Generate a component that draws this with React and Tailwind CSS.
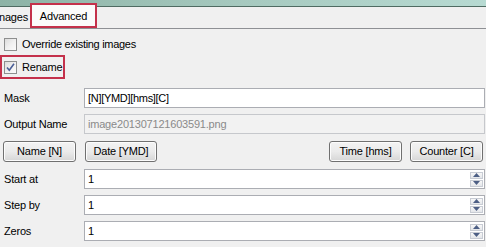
import React from "react";

const font = { fontFamily: '"Liberation Sans", Arial, sans-serif' };

function CheckBox({ checked }) {
  return (
    <div className="w-[13px] h-[13px] border border-[#8e8f8f] bg-gradient-to-br from-[#dcdcdc] via-[#f0f0f0] to-[#fbfbfb] flex items-center justify-center shrink-0">
      {checked && (
        <svg width="11" height="11" viewBox="0 0 11 11">
          <path d="M2 5.5 L4.3 8.3 L9 1.8" fill="none" stroke="#4a5f97" strokeWidth="1.6" />
        </svg>
      )}
    </div>
  );
}

function Btn({ children, w }) {
  return (
    <div
      className={`${w} h-[21px] rounded-[3px] border border-[#707070] bg-gradient-to-b from-[#f3f3f3] via-[#ebebeb] to-[#d6d6d6] flex items-center justify-center text-[11px] text-black tracking-[-0.2px] shadow-[inset_0_0_0_1px_#fcfcfc]`}
    >
      {children}
    </div>
  );
}

function Spin() {
  return (
    <div className="flex flex-col gap-[1px] mr-[1px]">
      <div className="w-[13px] h-[7px] border border-[#c8ccd4] bg-gradient-to-b from-[#f8f8f8] to-[#e4e6ea] flex items-center justify-center">
        <svg width="7" height="4" viewBox="0 0 7 4"><path d="M0 4 L3.5 0 L7 4 Z" fill="#4d5f85" /></svg>
      </div>
      <div className="w-[13px] h-[7px] border border-[#c8ccd4] bg-gradient-to-b from-[#f8f8f8] to-[#e4e6ea] flex items-center justify-center">
        <svg width="7" height="4" viewBox="0 0 7 4"><path d="M0 0 L3.5 4 L7 0 Z" fill="#4d5f85" /></svg>
      </div>
    </div>
  );
}

function Row({ label, children, mt }) {
  return (
    <div className={`flex items-center ${mt}`}>
      <div className="w-[84px] pl-[4px] text-[11px] text-black tracking-[-0.2px]">{label}</div>
      {children}
    </div>
  );
}

function SpinInput({ value }) {
  return (
    <div className="w-[401px] h-[20px] border border-[#abadb3] bg-white flex items-center justify-between">
      <span className="pl-[3px] text-[11px] text-black">{value}</span>
      <Spin />
    </div>
  );
}

export default function App() {
  return (
    <div className="w-[486px] h-[247px] bg-[#f0f0f0] overflow-hidden flex flex-col" style={font}>
      <div className="h-[6px] bg-gradient-to-r from-[#8db3a6] via-[#a6c9bf] to-[#b7dad2]" />
      <div className="h-[1px] bg-[#4f6b62]" />
      <div className="h-[22px] flex border-b border-[#8e9094] bg-[#f0f0f0]">
        <div className="w-[30px] overflow-hidden flex items-end pb-[3px]">
          <span className="text-[11px] text-black -ml-[1px] tracking-[-0.2px]">nages</span>
        </div>
        <div className="w-[67px] h-[25px] -mt-[4px] border-2 border-[#c4314b] bg-[#fbfbfb] flex items-center justify-center pt-[2px] relative z-10">
          <span className="text-[11px] text-black tracking-[-0.2px]">Advanced</span>
        </div>
      </div>

      <div className="flex items-center mt-[9px] pl-[4px] gap-[5px] h-[13px]">
        <CheckBox />
        <span className="text-[11px] text-black tracking-[-0.3px]">Override existing images</span>
      </div>

      <div className="mt-[4px] ml-0 w-[65px] h-[24px] border-2 border-[#c4314b] flex items-center pl-[2px] gap-[5px]">
        <CheckBox checked />
        <span className="text-[11px] text-black tracking-[-0.2px]">Rename</span>
      </div>

      <Row label="Mask" mt="mt-[9px]">
        <div className="w-[401px] h-[20px] border border-[#abadb3] bg-white flex items-center">
          <span className="pl-[3px] text-[11px] text-black tracking-[-0.3px]">[N][YMD][hms][C]</span>
        </div>
      </Row>

      <Row label="Output Name" mt="mt-[6px]">
        <div className="w-[401px] h-[20px] border border-[#c6c8cc] bg-[#f2f2f2] flex items-center">
          <span className="pl-[3px] text-[11px] text-[#8a8a8a] tracking-[-0.2px]">image201307121603591.png</span>
        </div>
      </Row>

      <div className="flex mt-[7px] px-[3px] h-[21px]">
        <Btn w="w-[73px]">Name [N]</Btn>
        <div className="w-[9px]" />
        <Btn w="w-[72px]">Date [YMD]</Btn>
        <div className="flex-1" />
        <Btn w="w-[73px]">Time [hms]</Btn>
        <div className="w-[8px]" />
        <Btn w="w-[73px]">Counter [C]</Btn>
      </div>

      <Row label="Start at" mt="mt-[7px]">
        <SpinInput value="1" />
      </Row>
      <Row label="Step by" mt="mt-[6px]">
        <SpinInput value="1" />
      </Row>
      <Row label="Zeros" mt="mt-[6px]">
        <SpinInput value="1" />
      </Row>
    </div>
  );
}
